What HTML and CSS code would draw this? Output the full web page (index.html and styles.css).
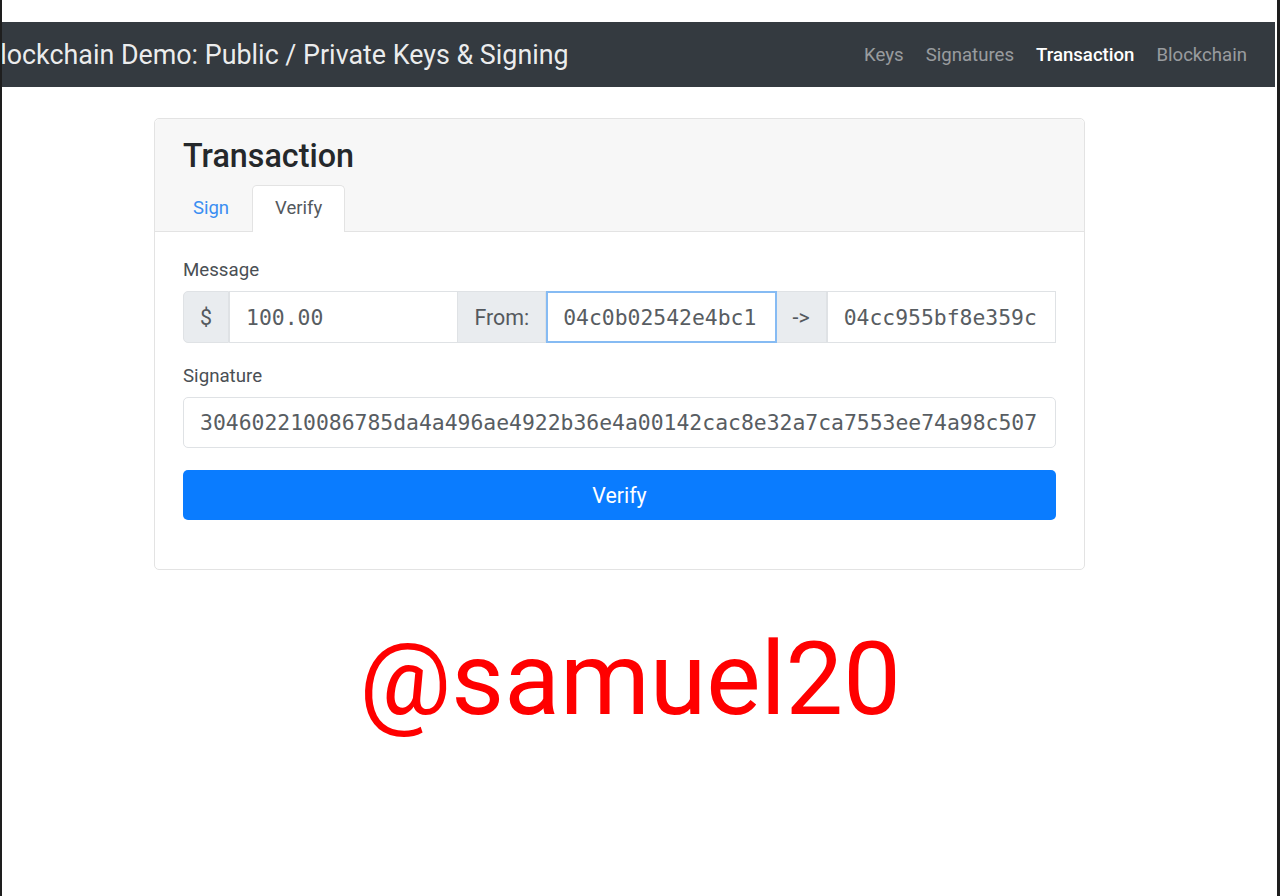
FILE: index.html
```html
<!DOCTYPE html>
<html lang="en">
<head>
<meta charset="utf-8">
<title>Blockchain Demo: Public / Private Keys &amp; Signing</title>
<link rel="stylesheet" href="styles.css">
</head>
<body>
<div class="page">
  <nav class="navbar">
    <span class="brand">Blockchain Demo: Public / Private Keys &amp; Signing</span>
    <ul class="nav-links">
      <li><a class="nav-link" href="#">Keys</a></li>
      <li><a class="nav-link" href="#">Signatures</a></li>
      <li><a class="nav-link active" href="#">Transaction</a></li>
      <li><a class="nav-link" href="#">Blockchain</a></li>
    </ul>
  </nav>

  <div class="card">
    <div class="card-header">
      <h3 class="card-title">Transaction</h3>
      <ul class="tabs">
        <li><a class="tab" href="#">Sign</a></li>
        <li><a class="tab active" href="#">Verify</a></li>
      </ul>
    </div>
    <div class="card-body">
      <label class="label">Message</label>
      <div class="input-group">
        <span class="addon">$</span>
        <input class="field mono" type="text" value="100.00">
        <span class="addon">From:</span>
        <input class="field mono focused" type="text" value="04c0b02542e4bc1">
        <span class="addon">-&gt;</span>
        <input class="field mono" type="text" value="04cc955bf8e359c">
      </div>
      <label class="label label-sig">Signature</label>
      <input class="field mono single" type="text" value="304602210086785da4a496ae4922b36e4a00142cac8e32a7ca7553ee74a98c507">
      <button class="btn-verify" type="button">Verify</button>
    </div>
  </div>

  <div class="watermark">@samuel20</div>
</div>
</body>
</html>
```

FILE: styles.css
```css
html, body {
  margin: 0;
  padding: 0;
  background: #ffffff;
}

body {
  font-family: Roboto, "Noto Sans", "Liberation Sans", sans-serif;
  color: #212529;
}

.page {
  min-height: 896px;
  box-sizing: border-box;
  border-left: 2px solid #1e1e1e;
  border-right: 3px solid #1e1e1e;
  padding-top: 22px;
  overflow: hidden;
}

/* Navbar */
.navbar {
  height: 65px;
  background: #343a40;
  margin-right: 2px;
  display: flex;
  align-items: center;
  justify-content: space-between;
  overflow: hidden;
  padding-right: 17px;
}

.brand {
  font-size: 26.85px;
  color: rgba(255, 255, 255, 0.92);
  margin-left: -18.5px;
  white-space: nowrap;
}

.nav-links {
  list-style: none;
  margin: 0;
  padding: 0;
  display: flex;
}

.nav-link {
  display: block;
  padding: 0 11px;
  font-size: 18.6px;
  color: rgba(255, 255, 255, 0.5);
  text-decoration: none;
}

.nav-link.active {
  color: #ffffff;
  font-weight: 500;
}

/* Card */
.card {
  margin: 31px 0 0 152px;
  width: 931px;
  box-sizing: border-box;
  border: 1px solid #e3e3e3;
  border-radius: 5px;
}

.card-header {
  background: #f7f7f7;
  border-bottom: 1px solid #e3e3e3;
  border-radius: 5px 5px 0 0;
  padding: 18px 28px 0;
}

.card-title {
  margin: 0 0 10px;
  font-size: 32.3px;
  font-weight: 500;
  line-height: 38px;
  color: #25282b;
}

.tabs {
  list-style: none;
  margin: 0 0 -1px -13px;
  padding: 0;
  display: flex;
}

.tab {
  display: block;
  padding: 8px 22px 9px;
  font-size: 18.5px;
  line-height: 28px;
  color: #3a8ef2;
  text-decoration: none;
  border: 1px solid transparent;
  border-bottom: 0;
  border-radius: 5px 5px 0 0;
}

.tab.active {
  color: #53585d;
  background: #ffffff;
  border-color: #e3e3e3;
  padding-bottom: 10px;
}

.card-body {
  padding: 24px 28px 49px;
}

.label {
  display: block;
  font-size: 18.7px;
  line-height: 28px;
  color: #4a4f54;
  margin-bottom: 7px;
}

.label-sig {
  margin-top: 19px;
}

.input-group {
  display: flex;
  height: 52px;
}

.addon {
  display: flex;
  align-items: center;
  padding: 0 16px;
  background: #e9ecef;
  border: 1px solid #dfe2e5;
  font-size: 21.4px;
  color: #54595e;
}

.input-group > * + * {
  margin-left: -1px;
}

.input-group > :first-child {
  border-radius: 5px 0 0 5px;
}

.input-group > :last-child {
  border-radius: 0 5px 5px 0;
}

.field {
  box-sizing: border-box;
  border: 1px solid #dfe2e5;
  background: #ffffff;
  padding: 0 15px 0 16px;
  color: #585d62;
  outline: none;
  margin: 0;
}

.input-group .field {
  flex: 1 1 0;
  min-width: 0;
  height: 52px;
  border-radius: 0;
}

.mono {
  font-family: "DejaVu Sans Mono", "Liberation Mono", monospace;
  font-size: 21.4px;
}

.field.focused {
  border: 2px solid #86bbf3;
  position: relative;
  z-index: 1;
  padding-left: 15px;
}

.field.single {
  display: block;
  width: 100%;
  height: 51px;
  border-radius: 5px;
}

.btn-verify {
  display: block;
  width: 100%;
  height: 50px;
  margin-top: 22px;
  border: 0;
  border-radius: 5px;
  background: #0a7cff;
  color: #ffffff;
  font-family: Roboto, "Noto Sans", "Liberation Sans", sans-serif;
  font-size: 21.3px;
}

/* Watermark */
.watermark {
  margin-top: 49px;
  padding-right: 19px;
  text-align: center;
  font-family: Roboto, "Liberation Sans", sans-serif;
  font-size: 102.5px;
  line-height: normal;
  color: #ff0000;
}
```
